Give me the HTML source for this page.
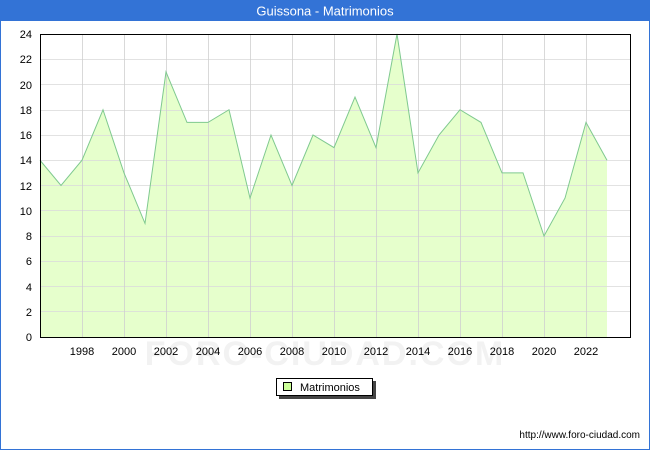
<!DOCTYPE html>
<html><head><meta charset="utf-8"><style>
body{margin:0;width:650px;height:450px;overflow:hidden;background:#fff;font-family:"Liberation Sans",sans-serif}
</style></head><body>
<svg width="650" height="450" xmlns="http://www.w3.org/2000/svg" font-family="Liberation Sans, sans-serif">
<rect x="0.5" y="0.5" width="649" height="449" fill="#fff" stroke="#3373d6"/>
<rect x="0" y="0" width="650" height="21" fill="#3373d6"/>
<text x="325" y="15.5" fill="#fff" font-size="13" text-anchor="middle">Guissona - Matrimonios</text>
<polygon fill="#e6ffcc" stroke="none" points="40,337 40,160.25 61,185.5 82,160.25 103,109.75 124,172.9 145,223.4 166,71.9 187,122.4 208,122.4 229,109.75 250,198.1 271,135 292,185.5 313,135 334,147.6 355,97.1 376,147.6 397,34 418,172.9 439,135 460,109.75 481,122.4 502,172.9 523,172.9 544,236 565,198.1 586,122.4 607,160.25 607,337"/>
<g stroke="#dcdcdc" stroke-width="1" opacity="0.8">
<line x1="40" y1="311.5" x2="630" y2="311.5"/><line x1="40" y1="286.5" x2="630" y2="286.5"/>
<line x1="40" y1="261.5" x2="630" y2="261.5"/><line x1="40" y1="236.5" x2="630" y2="236.5"/>
<line x1="40" y1="210.5" x2="630" y2="210.5"/><line x1="40" y1="185.5" x2="630" y2="185.5"/>
<line x1="40" y1="160.5" x2="630" y2="160.5"/><line x1="40" y1="135.5" x2="630" y2="135.5"/>
<line x1="40" y1="110.5" x2="630" y2="110.5"/><line x1="40" y1="84.5" x2="630" y2="84.5"/>
<line x1="40" y1="59.5" x2="630" y2="59.5"/>
</g>
<g stroke="#d0d0d0" opacity="0.8">
<line x1="82.5" y1="34" x2="82.5" y2="337"/><line x1="124.5" y1="34" x2="124.5" y2="337"/>
<line x1="166.5" y1="34" x2="166.5" y2="337"/><line x1="208.5" y1="34" x2="208.5" y2="337"/>
<line x1="250.5" y1="34" x2="250.5" y2="337"/><line x1="292.5" y1="34" x2="292.5" y2="337"/>
<line x1="334.5" y1="34" x2="334.5" y2="337"/><line x1="376.5" y1="34" x2="376.5" y2="337"/>
<line x1="418.5" y1="34" x2="418.5" y2="337"/><line x1="460.5" y1="34" x2="460.5" y2="337"/>
<line x1="502.5" y1="34" x2="502.5" y2="337"/><line x1="544.5" y1="34" x2="544.5" y2="337"/>
<line x1="586.5" y1="34" x2="586.5" y2="337"/>
</g>
<polyline fill="none" stroke="#7fc98f" stroke-width="1" points="40,160.25 61,185.5 82,160.25 103,109.75 124,172.9 145,223.4 166,71.9 187,122.4 208,122.4 229,109.75 250,198.1 271,135 292,185.5 313,135 334,147.6 355,97.1 376,147.6 397,34 418,172.9 439,135 460,109.75 481,122.4 502,172.9 523,172.9 544,236 565,198.1 586,122.4 607,160.25"/>
<text x="325" y="365" font-size="34" fill="#f2f2f2" text-anchor="middle" font-weight="bold" letter-spacing="2">FORO-CIUDAD.COM</text>
<rect x="40.5" y="34.5" width="590" height="303" fill="none" stroke="#000"/>
<g font-size="11" fill="#000" text-anchor="end">
<text x="32" y="341">0</text><text x="32" y="316">2</text><text x="32" y="291">4</text>
<text x="32" y="265">6</text><text x="32" y="240">8</text><text x="32" y="215">10</text>
<text x="32" y="190">12</text><text x="32" y="164">14</text><text x="32" y="139">16</text>
<text x="32" y="114">18</text><text x="32" y="89">20</text><text x="32" y="63">22</text>
<text x="32" y="38">24</text>
</g>
<g font-size="11" fill="#000" text-anchor="middle">
<text x="82" y="355">1998</text><text x="124" y="355">2000</text><text x="166" y="355">2002</text>
<text x="208" y="355">2004</text><text x="250" y="355">2006</text><text x="292" y="355">2008</text>
<text x="334" y="355">2010</text><text x="376" y="355">2012</text><text x="418" y="355">2014</text>
<text x="460" y="355">2016</text><text x="502" y="355">2018</text><text x="544" y="355">2020</text>
<text x="586" y="355">2022</text>
</g>
<rect x="279" y="381" width="97" height="18" fill="#444"/>
<rect x="276.5" y="378.5" width="96" height="17" fill="#fff" stroke="#000"/>
<rect x="283.5" y="382.5" width="8" height="8" fill="#ccff99" stroke="#000"/>
<text x="300" y="391" font-size="11">Matrimonios</text>
<text x="640" y="438" font-size="10" text-anchor="end">http://www.foro-ciudad.com</text>
</svg>
</body></html>
